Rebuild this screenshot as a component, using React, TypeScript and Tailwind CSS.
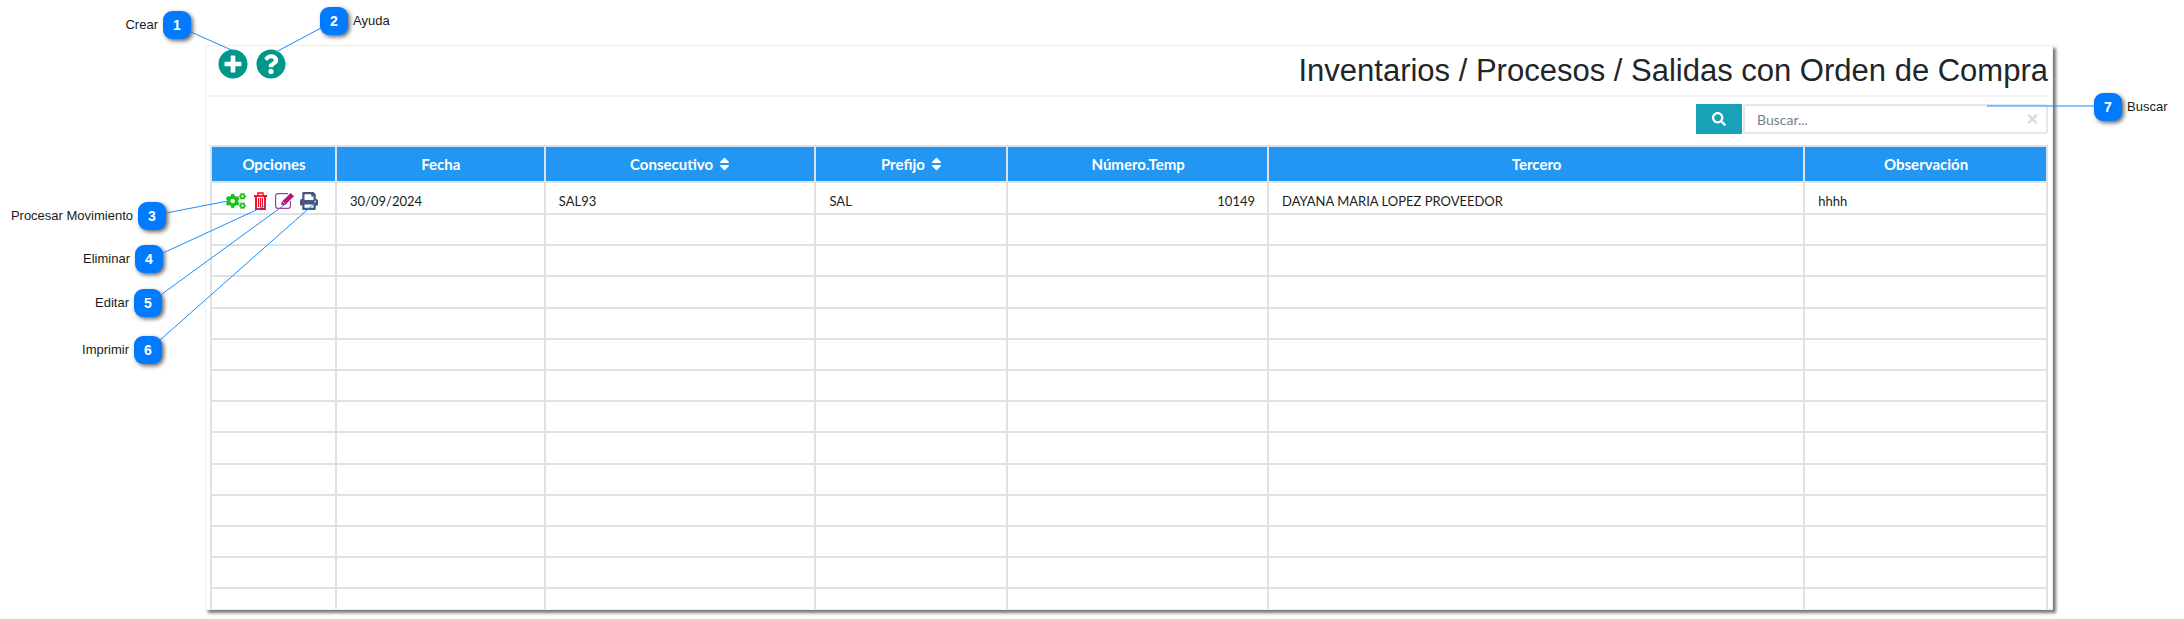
import { FaCogs, FaPlusCircle, FaPrint, FaQuestionCircle, FaSearch, FaSort, FaTimes } from 'react-icons/fa';

const callouts = [
  { n: 1, label: 'Crear', box: 'left-[163px] top-[11px]', text: 'right-[2026px] top-[17px]' },
  { n: 2, label: 'Ayuda', box: 'left-[320px] top-[7px]', text: 'left-[353px] top-[13px]' },
  { n: 3, label: 'Procesar Movimiento', box: 'left-[138px] top-[202px]', text: 'right-[2051px] top-[208px]' },
  { n: 4, label: 'Eliminar', box: 'left-[135px] top-[245px]', text: 'right-[2054px] top-[251px]' },
  { n: 5, label: 'Editar', box: 'left-[134px] top-[289px]', text: 'right-[2055px] top-[295px]' },
  { n: 6, label: 'Imprimir', box: 'left-[134px] top-[336px]', text: 'right-[2055px] top-[342px]' },
  { n: 7, label: 'Buscar', box: 'left-[2094px] top-[93px]', text: 'left-[2127px] top-[99px]' },
];

const lines = [
  [191, 32, 236, 52],
  [321, 28, 276, 52],
  [166, 213, 228, 201],
  [163, 253, 265, 206],
  [162, 294, 287, 203],
  [160, 340, 315, 203],
  [2094, 106, 1987, 106],
];

const columns = [
  { title: 'Opciones', width: 'w-[125px]' },
  { title: 'Fecha', width: 'w-[209px]' },
  { title: 'Consecutivo', width: 'w-[271px]', sort: true },
  { title: 'Prefijo', width: 'w-[192px]', sort: true },
  { title: 'Número.Temp', width: 'w-[261px]' },
  { title: 'Tercero', width: 'w-[537px]' },
  { title: 'Observación', width: 'w-[243px]' },
];

const emptyRows = Array.from({ length: 13 }, (_, i) => i);
const cell = 'border-2 border-[#dee2e6] pl-[13px] pr-3 align-middle';
const dataCell = `${cell} pt-[8px]`;

const TrashIcon = () => (
  <svg viewBox="0 0 13 18" className="ml-[8px] h-[18px] w-[13px]" fill="none" stroke="#f5001d">
    <path d="M0 4H13" strokeWidth="1.8" />
    <path d="M4 3.5V1H9V3.5" strokeWidth="1.4" />
    <path d="M2 4V17H11V4" strokeWidth="1.8" />
    <path d="M4.6 6V15M6.5 6V15M8.4 6V15" strokeWidth="1.1" />
  </svg>
);

const EditIcon = () => (
  <svg viewBox="0 0 20 17" className="ml-[8px] h-[17px] w-[20px]" fill="none">
    <path d="M13 1.6H3C1.6 1.6 0.6 2.6 0.6 4V14C0.6 15.4 1.6 16.4 3 16.4H13C14.4 16.4 15.4 15.4 15.4 14V9" stroke="#a83a98" strokeWidth="1.2" />
    <path d="M6 13L7 9.6L15.6 1L19 4.2L10 13Z" fill="#c0137a" />
    <path d="M7.8 9.6L10 11.8" stroke="#ffffff" strokeWidth="0.7" />
  </svg>
);

export default function App() {
  return (
    <div className="relative h-[619px] w-[2184px] overflow-hidden bg-white">
      <div className="ml-[205px] pt-[45px]">
        <div className="h-[565px] w-[1848px] overflow-hidden border border-[#eeeeee] bg-white px-[4px] shadow-[3px_3px_3px_#777777]">
          <div className="flex h-[51px] items-start justify-between border-b-2 border-[#f0f0f0]">
            <div className="flex gap-[8px] pl-[8px] pt-[3px] text-[#009688]">
              <FaPlusCircle className="h-[30px] w-[30px]" />
              <FaQuestionCircle className="h-[30px] w-[30px]" />
            </div>
            <h1 className="pt-[5px] font-['Liberation_Sans',sans-serif] text-[31px] leading-[40px] text-[#212529]">
              Inventarios / Procesos / Salidas con Orden de Compra
            </h1>
          </div>

          <div className="flex justify-end gap-[1px] pt-[7px]">
            <button className="flex h-[30px] w-[46px] items-center justify-center bg-[#17a2b8] text-white">
              <FaSearch className="h-[14px] w-[14px]" />
            </button>
            <div className="relative h-[30px] w-[305px]">
              <input
                placeholder="Buscar..."
                className="h-full w-full rounded-[3px] border-2 border-[#e4e7e7] bg-white pl-[12px] font-['Lato',sans-serif] text-[14px] placeholder:text-[#75818f]"
              />
              <FaTimes className="absolute right-[9px] top-[8px] h-[14px] w-[13px] text-[#d5dfdc]" />
            </div>
          </div>

          <table className="mt-[11px] table-fixed border-collapse font-['Lato',sans-serif] text-[13px] text-[#1a1d20]">
            <thead>
              <tr className="h-[36px] bg-[#2196f3] text-[15px] font-bold text-white">
                {columns.map((col) => (
                  <th key={col.title} className={`${cell} ${col.width} text-center`}>
                    <span className="inline-flex items-center gap-[5px]">
                      {col.title}
                      {col.sort && <FaSort className="h-[16px] w-[13px]" />}
                    </span>
                  </th>
                ))}
              </tr>
            </thead>
            <tbody>
              <tr className="h-[32px]">
                <td className={`${cell} pt-[5px]`}>
                  <div className="flex items-center pl-px">
                    <FaCogs className="h-[18px] w-[20px] text-[#14c414]" />
                    <TrashIcon />
                    <EditIcon />
                    <FaPrint className="ml-[5px] h-[18px] w-[18px] text-[#47597a]" />
                  </div>
                </td>
                <td className={dataCell}>30/09/2024</td>
                <td className={dataCell}>SAL93</td>
                <td className={dataCell}>SAL</td>
                <td className={`${dataCell} text-right`}>10149</td>
                <td className={dataCell}>DAYANA MARIA LOPEZ PROVEEDOR</td>
                <td className={dataCell}>hhhh</td>
              </tr>
              {emptyRows.map((row) => (
                <tr key={row} className="h-[31.2px]">
                  {columns.map((col) => (
                    <td key={col.title} className={cell}></td>
                  ))}
                </tr>
              ))}
            </tbody>
          </table>
        </div>
      </div>

      <svg className="absolute left-0 top-0 h-[619px] w-[2184px]" fill="none" stroke="#1a8cff" strokeWidth="1">
        {lines.map(([x1, y1, x2, y2]) => (
          <line key={`${x1}-${y1}`} x1={x1} y1={y1} x2={x2} y2={y2} />
        ))}
      </svg>

      {callouts.map((c) => (
        <div key={c.n}>
          <div className={`absolute ${c.box} flex h-[28px] w-[28px] items-center justify-center rounded-[9px] bg-[#007bff] font-['Liberation_Sans',sans-serif] text-[14px] font-bold text-white shadow-[2px_2px_4px_#666666]`}>
            {c.n}
          </div>
          <div className={`absolute ${c.text} whitespace-nowrap font-['Liberation_Sans',sans-serif] text-[13px] leading-[16px] text-[#1a1a1a]`}>
            {c.label}
          </div>
        </div>
      ))}
    </div>
  );
}
